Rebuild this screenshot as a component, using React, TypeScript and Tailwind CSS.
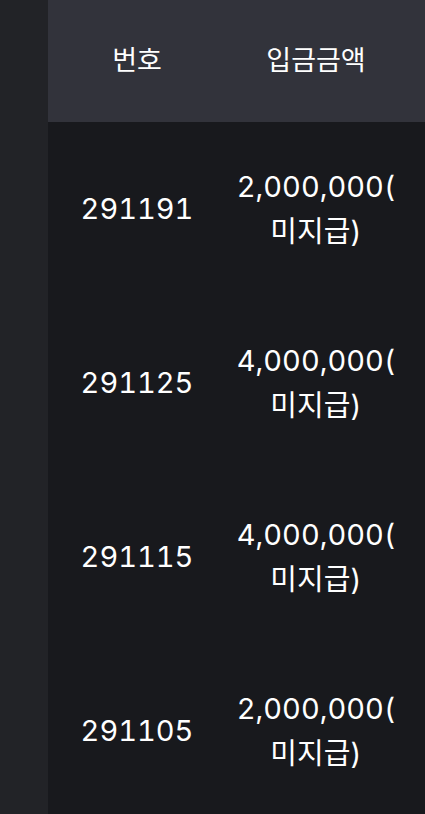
const rows = [
  { id: "291191", amount: "2,000,000" },
  { id: "291125", amount: "4,000,000" },
  { id: "291115", amount: "4,000,000" },
  { id: "291105", amount: "2,000,000" },
];

export default function App() {
  return (
    <div
      className="flex h-[814px] w-[425px] overflow-hidden bg-[#18191d] text-white"
      style={{ fontFamily: 'Inter, "Noto Sans CJK KR", sans-serif' }}
    >
      <div className="w-[48px] shrink-0 bg-[#222327]" />
      <div className="flex-1">
        <div className="flex h-[122px] items-center bg-[#32333b] text-[27px]">
          <div className="w-[178px] shrink-0 text-center">번호</div>
          <div className="w-[180px] shrink-0 text-center">입금금액</div>
        </div>
        {rows.map((r) => (
          <div key={r.id} className="flex h-[174px] items-center text-[29px] tabular-nums">
            <div className="w-[178px] shrink-0 text-center">{r.id}</div>
            <div className="w-[180px] shrink-0 text-center leading-[45px]">
              {r.amount}(
              <br />
              미지급)
            </div>
          </div>
        ))}
      </div>
    </div>
  );
}
